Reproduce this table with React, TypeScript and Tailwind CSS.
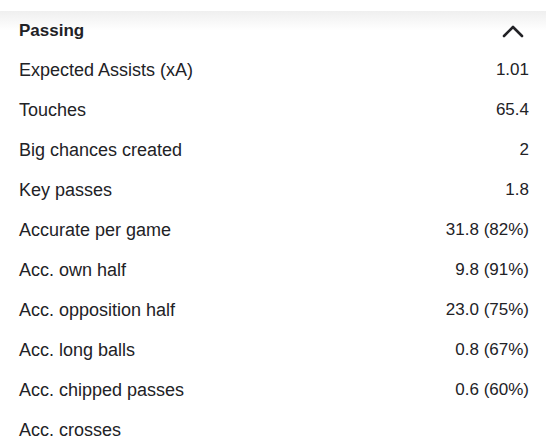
import React from 'react';

const rows = [
  { label: 'Expected Assists (xA)', value: '1.01' },
  { label: 'Touches', value: '65.4' },
  { label: 'Big chances created', value: '2' },
  { label: 'Key passes', value: '1.8' },
  { label: 'Accurate per game', value: '31.8 (82%)' },
  { label: 'Acc. own half', value: '9.8 (91%)' },
  { label: 'Acc. opposition half', value: '23.0 (75%)' },
  { label: 'Acc. long balls', value: '0.8 (67%)' },
  { label: 'Acc. chipped passes', value: '0.6 (60%)' },
  { label: 'Acc. crosses', value: '' },
];

const App = () => {
  return (
    <div
      className="w-[546px] h-[448px] overflow-hidden bg-white text-[#222226]"
      style={{ fontFamily: '"Liberation Sans", Arial, sans-serif' }}
    >
      <div className="h-[11px] bg-white" />
      {/* Header */}
      <div className="h-[39px] flex items-center justify-between pl-[19px] pr-[22px] bg-gradient-to-b from-[#efefef] via-white to-white">
        <h2 className="text-[17px] font-bold">Passing</h2>
        <svg width="22" height="14" viewBox="0 0 22 14" fill="none">
          <path d="M2 12 L11 3 L20 12" stroke="#222226" strokeWidth="2.6" strokeLinecap="round" strokeLinejoin="round" />
        </svg>
      </div>

      {/* Stat rows */}
      <div className="flex flex-col">
        {rows.map((row, index) => (
          <div key={index} className="h-[40px] flex items-center justify-between pl-[19px] pr-[17px]">
            <span className="text-[18px]">{row.label}</span>
            <span className="text-[17px]">{row.value}</span>
          </div>
        ))}
      </div>
    </div>
  );
};

export default App;
